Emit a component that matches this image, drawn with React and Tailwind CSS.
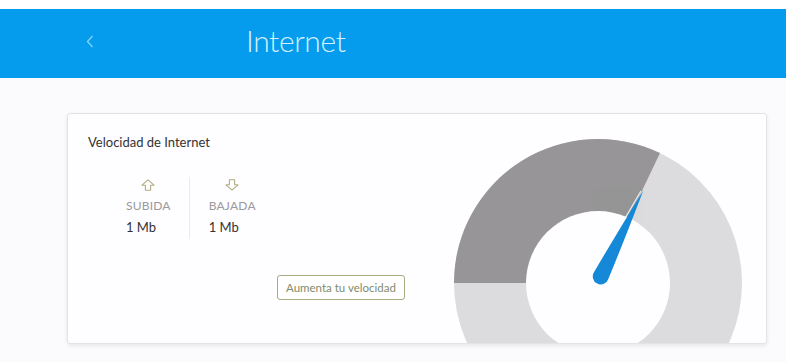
import React from 'react';

function ArrowIcon({ down }) {
  return (
    <svg width="14" height="12" viewBox="0 0 14 12" className={down ? 'rotate-180' : ''}>
      <path
        d="M7 0.8 L13 6.2 L9.6 6.2 L9.6 11.2 L4.4 11.2 L4.4 6.2 L1 6.2 Z"
        fill="none"
        stroke="#b3ae84"
        strokeWidth="1.1"
        strokeLinejoin="round"
      />
    </svg>
  );
}

function Stat({ label, value, down, divider }) {
  return (
    <div className={divider ? 'flex flex-col pr-[18px] border-r border-[#ececee]' : 'flex flex-col pl-[19px]'}>
      <div className="flex justify-center pt-[2px] h-[14px]">
        <ArrowIcon down={down} />
      </div>
      <div className="mt-[7px] text-[12px] leading-[16px] text-[#9b9a9c] tracking-[0.2px]">{label}</div>
      <div className="mt-[5px] text-[13px] leading-[16px] text-[#333] pb-[4px]">{value}</div>
    </div>
  );
}

function Gauge() {
  const cx = 146;
  const cy = 147;
  const r = 144;
  const a = (64.5 * Math.PI) / 180;
  const ex = cx + r * Math.cos(a);
  const ey = cy - r * Math.sin(a);

  return (
    <svg width="292" height="230" viewBox="0 0 292 230" className="shrink-0 mt-[22px] mr-[22px]">
      <circle cx={cx} cy={cy} r={r} fill="#dcdbdd" />
      <path d={`M ${cx - r} ${cy} A ${r} ${r} 0 0 1 ${ex} ${ey} L ${cx} ${cy} Z`} fill="#979597" />
      <circle cx={cx} cy={cy} r="72" fill="#fefdff" />
      <g transform="translate(148 142) rotate(26.3)">
        <path d="M -1.8 -96 L -8.2 -4" stroke="#ffffff" strokeWidth="1.2" opacity="0.8" />
        <path d="M 0 -98 Q 5 -45 7.9 -3 A 8 8 0 1 1 -7.9 -3 Q -5 -45 0 -98 Z" fill="#1688d8" />
      </g>
    </svg>
  );
}

export default function App() {
  return (
    <div className="w-[786px] h-[362px] bg-[#fbfafc] overflow-hidden" style={{ fontFamily: 'Lato, "Open Sans", sans-serif' }}>
      {/* Header */}
      <div className="h-[9px] bg-white" />
      <div className="h-[69px] bg-[#059ced] flex items-center">
        <svg width="8" height="13" viewBox="0 0 8 13" className="ml-[86px] mt-[-4px]">
          <path d="M6.5 1 L1.5 6.5 L6.5 12" fill="none" stroke="#7fd6ff" strokeWidth="1.3" />
        </svg>
        <h1 className="ml-[152px] mt-[-6px] text-[30px] font-light text-[#d2f0ff] tracking-[-0.4px]">Internet</h1>
      </div>

      {/* Card */}
      <div className="mt-[35px] ml-[67px] w-[700px] h-[231px] bg-[#fefdff] border border-[#e3e2e6] rounded-[3px] shadow-[0_2px_4px_rgba(0,0,0,0.08)] overflow-hidden flex">
        <div className="flex-1 pl-[20px] pt-[20px]">
          <h2 className="text-[13px] leading-[17px] text-[#333]">Velocidad de Internet</h2>

          <div className="flex mt-[26px] ml-[38px]">
            <Stat label="SUBIDA" value="1 Mb" divider />
            <Stat label="BAJADA" value="1 Mb" down />
          </div>

          <button
            type="button"
            className="mt-[36px] ml-[189px] h-[25px] px-[8px] border border-[#a6ad83] rounded-[3px] text-[11.5px] text-[#7f8c6c] bg-white"
          >
            Aumenta tu velocidad
          </button>
        </div>
        <Gauge />
      </div>
    </div>
  );
}
